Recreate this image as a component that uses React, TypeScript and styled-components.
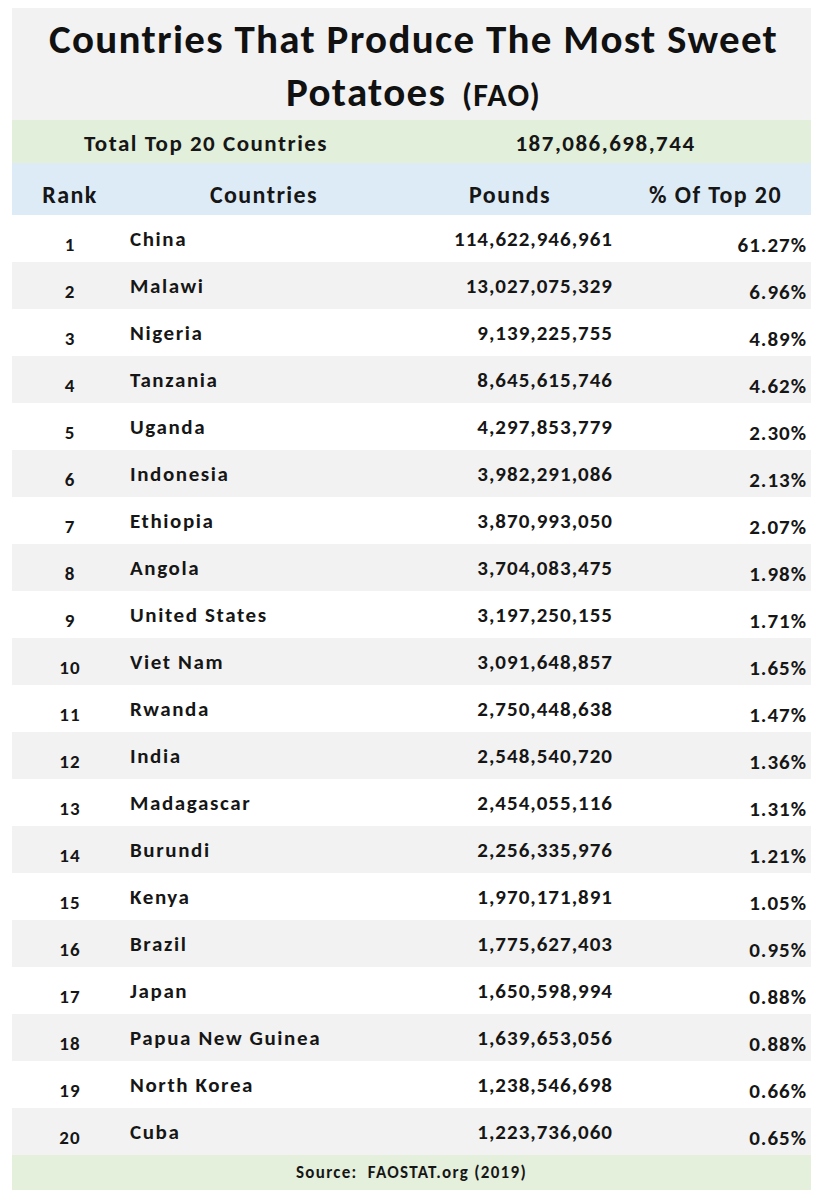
import React from "react";
import styled, { createGlobalStyle } from "styled-components";

const GlobalStyle = createGlobalStyle`
  body {
    margin: 0;
    background: #ffffff;
    font-family: "Carlito", "Lato", "Open Sans", sans-serif;
    color: #161616;
  }
`;

const COLS = "116px 272px 220px 191px";

const Sheet = styled.div`
  width: 799px;
  padding: 8px 26px 10px 12px;
  display: flex;
  flex-direction: column;
`;

const TitleBlock = styled.div`
  height: 112px;
  background: #f2f2f2;
  display: flex;
  flex-direction: column;
  align-items: center;
  justify-content: flex-start;
  padding-top: 5px;
  box-sizing: border-box;
`;

const TitleLine = styled.div`
  font-size: 41px;
  font-weight: 700;
  letter-spacing: 1.3px;
  line-height: 53px;
  color: #111;
  white-space: nowrap;
  padding-left: 4px;
`;

const TitleSmall = styled.span`
  font-size: 32px;
  letter-spacing: 1.2px;
  margin-left: 16px;
`;

const TotalBand = styled.div`
  height: 43px;
  background: #e2efda;
  display: grid;
  grid-template-columns: 388px 411px;
  align-items: center;
  font-size: 23px;
  font-weight: 700;
  letter-spacing: 1.5px;
`;

const Centered = styled.div`
  text-align: center;
  padding-top: 2px;
  white-space: nowrap;
`;

const HeaderBand = styled.div`
  height: 52px;
  background: #ddebf7;
  display: grid;
  grid-template-columns: ${COLS};
  align-items: end;
  padding-bottom: 6px;
  box-sizing: border-box;
  font-size: 24px;
  font-weight: 700;
  letter-spacing: 1.4px;
`;

const Row = styled.div<{ $shade: boolean }>`
  height: 47px;
  background: ${(p) => (p.$shade ? "#f2f2f2" : "#ffffff")};
  display: grid;
  grid-template-columns: ${COLS};
  align-items: center;
  font-size: 21px;
  font-weight: 700;
`;

const Cell = styled.div<{
  $align: "left" | "center" | "right";
  $shift?: number;
  $pad?: number;
  $spacing?: number;
  $size?: number;
}>`
  text-align: ${(p) => p.$align};
  position: relative;
  top: ${(p) => p.$shift ?? 0}px;
  padding-left: ${(p) => (p.$align === "left" ? p.$pad ?? 0 : 0)}px;
  padding-right: ${(p) => (p.$align === "right" ? p.$pad ?? 0 : 0)}px;
  ${(p) => (p.$spacing !== undefined ? `letter-spacing: ${p.$spacing}px;` : "")}
  ${(p) => (p.$size ? `font-size: ${p.$size}px;` : "")}
  white-space: nowrap;
`;

const SourceBand = styled.div`
  height: 35px;
  background: #e4efdc;
  display: flex;
  align-items: center;
  justify-content: center;
  font-size: 17px;
  font-weight: 700;
  letter-spacing: 1.3px;
  white-space: pre;
`;

const data: [string, string, string][] = [
  ["China", "114,622,946,961", "61.27%"],
  ["Malawi", "13,027,075,329", "6.96%"],
  ["Nigeria", "9,139,225,755", "4.89%"],
  ["Tanzania", "8,645,615,746", "4.62%"],
  ["Uganda", "4,297,853,779", "2.30%"],
  ["Indonesia", "3,982,291,086", "2.13%"],
  ["Ethiopia", "3,870,993,050", "2.07%"],
  ["Angola", "3,704,083,475", "1.98%"],
  ["United States", "3,197,250,155", "1.71%"],
  ["Viet Nam", "3,091,648,857", "1.65%"],
  ["Rwanda", "2,750,448,638", "1.47%"],
  ["India", "2,548,540,720", "1.36%"],
  ["Madagascar", "2,454,055,116", "1.31%"],
  ["Burundi", "2,256,335,976", "1.21%"],
  ["Kenya", "1,970,171,891", "1.05%"],
  ["Brazil", "1,775,627,403", "0.95%"],
  ["Japan", "1,650,598,994", "0.88%"],
  ["Papua New Guinea", "1,639,653,056", "0.88%"],
  ["North Korea", "1,238,546,698", "0.66%"],
  ["Cuba", "1,223,736,060", "0.65%"],
];

export default function App() {
  return (
    <>
      <GlobalStyle />
      <Sheet>
        <TitleBlock>
          <TitleLine>Countries That Produce The Most Sweet</TitleLine>
          <TitleLine>
            Potatoes<TitleSmall>(FAO)</TitleSmall>
          </TitleLine>
        </TitleBlock>
        <TotalBand>
          <Centered>Total Top 20 Countries</Centered>
          <Centered>187,086,698,744</Centered>
        </TotalBand>
        <HeaderBand>
          <Cell $align="center">Rank</Cell>
          <Cell $align="center">Countries</Cell>
          <Cell $align="center">Pounds</Cell>
          <Cell $align="center">% Of Top 20</Cell>
        </HeaderBand>
        {data.map(([country, pounds, pct], i) => (
          <Row key={country} $shade={i % 2 === 1}>
            <Cell $align="center" $shift={6} $size={19} $spacing={1}>
              {i + 1}
            </Cell>
            <Cell $align="left" $pad={2} $spacing={1.6}>
              {country}
            </Cell>
            <Cell $align="right" $pad={7} $spacing={1}>
              {pounds}
            </Cell>
            <Cell $align="right" $shift={6} $pad={4} $spacing={1}>
              {pct}
            </Cell>
          </Row>
        ))}
        <SourceBand>Source:  FAOSTAT.org (2019)</SourceBand>
      </Sheet>
    </>
  );
}
